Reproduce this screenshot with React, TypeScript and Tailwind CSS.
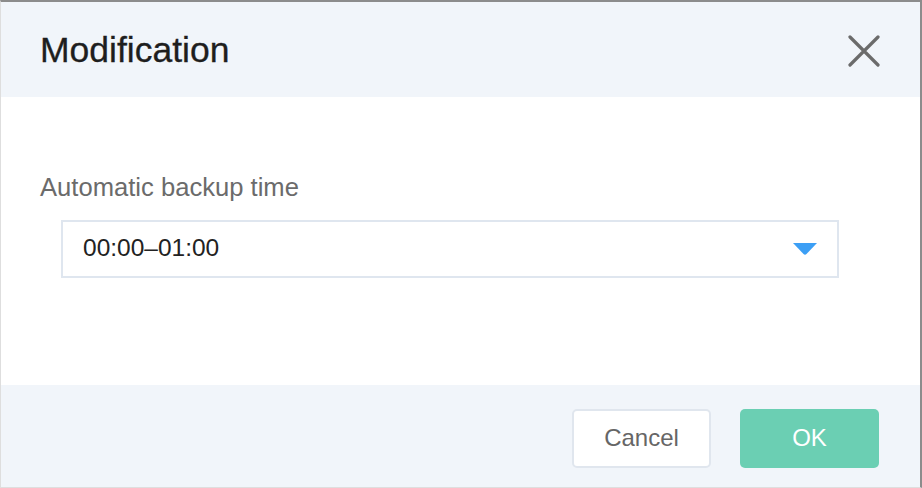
import React from "react";

export default function App() {
  const font = { fontFamily: '"Liberation Sans", Arial, sans-serif' };
  return (
    <div
      className="w-[922px] h-[488px] flex flex-col bg-white border-t-2 border-t-[#8c8c8c] border-r-2 border-r-[#8c8c8c] border-l border-l-[#dedede] border-b border-b-[#dedede] overflow-hidden"
      style={font}
    >
      <div className="h-[95px] shrink-0 bg-[#f1f5fa] flex items-center justify-between pl-[39px] pr-[40px]">
        <div className="text-[35.5px] leading-none text-[#1e1e1e] pt-[2px] [-webkit-text-stroke:0.3px_#1e1e1e]">Modification</div>
        <svg width="32" height="32" viewBox="0 0 32 32" className="mt-[2px]">
          <path d="M2 2 L30 30 M30 2 L2 30" stroke="#6b6b6b" strokeWidth="3.2" strokeLinecap="round" />
        </svg>
      </div>
      <div className="flex-1 bg-white flex flex-col pt-[78px]">
        <div className="pl-[39px] text-[25.6px] leading-none text-[#6b6b6b]">Automatic backup time</div>
        <div className="ml-[60px] mr-[81px] mt-[19px] h-[58px] border-2 border-[#dfe6ef] flex items-center justify-between pl-[20px] pr-[20px]">
          <span className="text-[24.5px] text-[#222] leading-none">00:00–01:00</span>
          <svg width="24" height="12" viewBox="0 0 24 12">
            <path d="M0 0 H24 L13.5 11 Q12 12.5 10.5 11 Z" fill="#3c9ff5" />
          </svg>
        </div>
      </div>
      <div className="h-[102px] shrink-0 bg-[#f1f5fa] flex items-center justify-end gap-[29px] pr-[41px] pt-[4px]">
        <button className="w-[139px] h-[59px] rounded-[5px] bg-white border-2 border-[#e0e6ee] text-[24px] text-[#666]">
          Cancel
        </button>
        <button className="w-[139px] h-[59px] rounded-[5px] bg-[#6bcfb3] text-[24px] text-white">
          OK
        </button>
      </div>
    </div>
  );
}
